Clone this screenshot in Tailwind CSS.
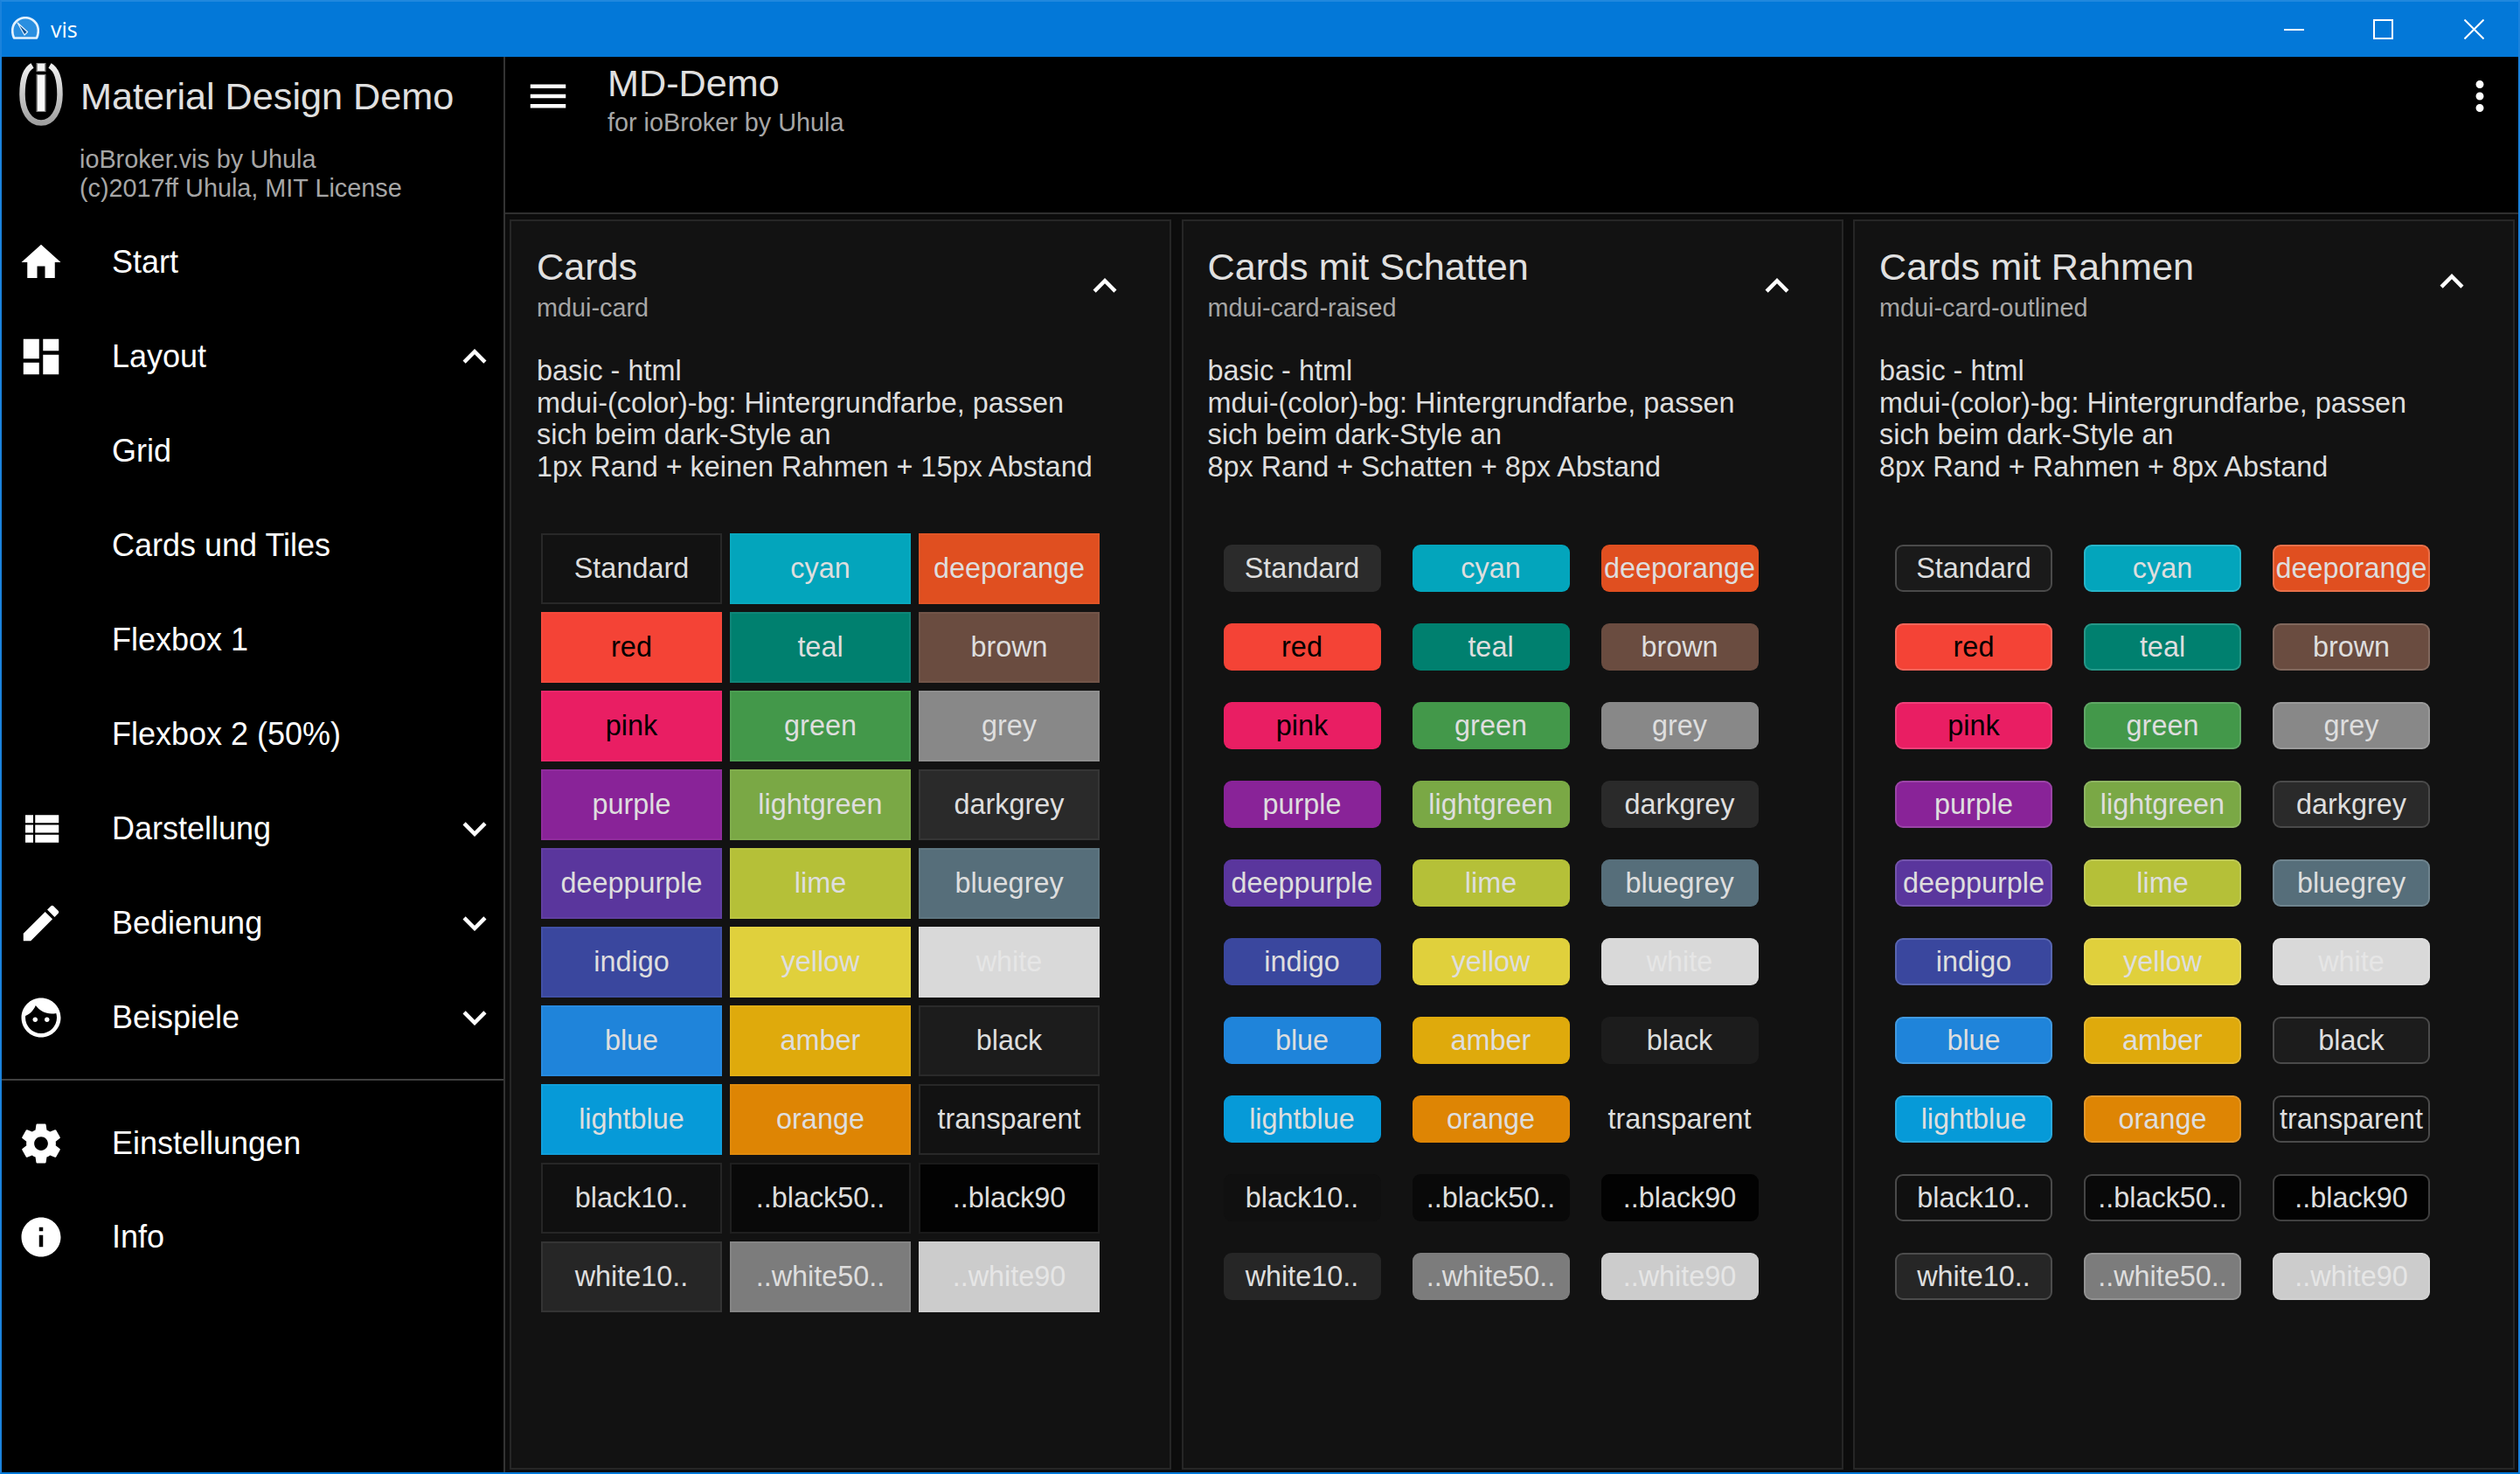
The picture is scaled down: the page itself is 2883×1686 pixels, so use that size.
<!DOCTYPE html>
<html lang="de">
<head>
    <meta charset="UTF-8">
    <title>vis</title>
    <script src="https://cdn.jsdelivr.net/npm/@tailwindcss/browser@4"></script>
</head>
<body class="h-[1686px] w-[2883px] overflow-hidden bg-[#0378d8] [font-family:'Liberation_Sans',sans-serif]">
<div class="flex h-full w-full flex-col border-x-2 border-t-2 border-b-2 border-x-[#1a82dc] border-t-[#2088de] border-b-[#0378d8]">

    <!-- Window title bar -->
    <div class="flex h-[63px] shrink-0 items-center bg-[#0378d8] text-white">
        <svg class="-mt-[4px] ml-[11px] h-[26px] w-[32px]" viewBox="0 0 32 26">
            <path d="M3 24.5 Q1.2 20.5 1.2 16 A14.8 14.8 0 0 1 30.8 16 Q30.8 20.5 29 24.5 Z" fill="#2a8fe0" stroke="#e4f2fd" stroke-width="2.6" stroke-linejoin="round"/>
            <path d="M7 7 L18.5 17.5 L15 21 Z" fill="#0a4f92" stroke="#e4f2fd" stroke-width="1.2" stroke-linejoin="round"/>
        </svg>
        <span class="ml-[13px] [font-family:'Open_Sans',sans-serif] text-[25px] leading-none">vis</span>
        <div class="ml-auto flex items-center">
            <div class="mr-[79px] h-[2px] w-[23px] bg-white"></div>
            <div class="mr-[81px] h-[23px] w-[23px] border-2 border-white"></div>
            <svg class="mr-[39px] h-[23px] w-[23px]" viewBox="0 0 23 23"><path d="M0.5 0.5 L22.5 22.5 M22.5 0.5 L0.5 22.5" stroke="#fff" stroke-width="2"/></svg>
        </div>
    </div>

    <div class="flex min-h-0 flex-1">
        <!-- Sidebar -->
        <aside class="flex w-[576px] shrink-0 flex-col border-r-2 border-[#333] bg-black text-white">
            <div class="relative h-[181px] shrink-0">
                <svg class="absolute left-[19px] top-[6px] h-[74px] w-[52px]" viewBox="0 0 52 74">
                    <defs>
                        <linearGradient id="logoRing" x1="0" y1="0" x2="0" y2="1">
                            <stop offset="0" stop-color="#efefef"/>
                            <stop offset="0.55" stop-color="#c4c4c4"/>
                            <stop offset="1" stop-color="#a0a0a0"/>
                        </linearGradient>
                    </defs>
                    <path d="M16 4 C7 9 4.5 24 4.5 37 C4.5 56 13 69.5 26 69.5 C39 69.5 47.5 56 47.5 37 C47.5 24 45 9 36 4" fill="none" stroke="url(#logoRing)" stroke-width="6.5"/>
                    <rect x="20.5" y="1" width="11" height="10" fill="#8a8a8a"/>
                    <rect x="22" y="2" width="8" height="8" fill="#f4f4f4"/>
                    <rect x="20.5" y="14" width="11" height="43" fill="#8a8a8a"/>
                    <rect x="22" y="15" width="8" height="41" fill="#f8f8f8"/>
                </svg>
                <div class="absolute left-[90px] top-[15px] whitespace-nowrap text-[43.2px] leading-[60px] text-[#e0e0e0]">Material Design Demo</div>
                <div class="absolute left-[89px] top-[101px] whitespace-nowrap text-[28.8px] leading-[33px] text-[#a6a6a6]">ioBroker.vis by Uhula<br>(c)2017ff Uhula, MIT License</div>
            </div>

            <nav class="flex flex-col">
                <a class="flex h-[108px] items-center text-[36px]">
                    <svg class="ml-[18px] h-[54px] w-[54px] fill-white" viewBox="0 0 24 24"><path d="M10 20v-6h4v6h5v-8h3L12 3 2 12h3v8z"/></svg>
                    <span class="ml-[54px]">Start</span>
                </a>
                <a class="flex h-[108px] items-center text-[36px]">
                    <svg class="ml-[18px] h-[54px] w-[54px] fill-white" viewBox="0 0 24 24"><path d="M3 13h8V3H3v10zm0 8h8v-6H3v6zm10 0h8V11h-8v10zm0-18v6h8V3h-8z"/></svg>
                    <span class="ml-[54px]">Layout</span>
                    <svg class="ml-auto mr-[6px] h-[54px] w-[54px] fill-white" viewBox="0 0 24 24"><path d="M12 8l-6 6 1.41 1.41L12 10.83l4.59 4.58L18 14z"/></svg>
                </a>
                <a class="flex h-[108px] items-center pl-[126px] text-[36px]">Grid</a>
                <a class="flex h-[108px] items-center pl-[126px] text-[36px]">Cards und Tiles</a>
                <a class="flex h-[108px] items-center pl-[126px] text-[36px]">Flexbox 1</a>
                <a class="flex h-[108px] items-center pl-[126px] text-[36px]">Flexbox 2 (50%)</a>
                <a class="flex h-[108px] items-center text-[36px]">
                    <svg class="ml-[18px] h-[54px] w-[54px] fill-white" viewBox="0 0 24 24"><path d="M4 14h4v-4H4v4zm0 5h4v-4H4v4zM4 9h4V5H4v4zm5 5h12v-4H9v4zm0 5h12v-4H9v4zM9 5v4h12V5H9z"/></svg>
                    <span class="ml-[54px]">Darstellung</span>
                    <svg class="ml-auto mr-[6px] h-[54px] w-[54px] fill-white" viewBox="0 0 24 24"><path d="M16.59 8.59L12 13.17 7.41 8.59 6 10l6 6 6-6z"/></svg>
                </a>
                <a class="flex h-[108px] items-center text-[36px]">
                    <svg class="ml-[18px] h-[54px] w-[54px] fill-white" viewBox="0 0 24 24"><path d="M3 17.25V21h3.75L17.81 9.94l-3.75-3.75L3 17.25zM20.71 7.04c.39-.39.39-1.02 0-1.41l-2.34-2.34c-.39-.39-1.02-.39-1.41 0l-1.83 1.83 3.75 3.75 1.83-1.83z"/></svg>
                    <span class="ml-[54px]">Bedienung</span>
                    <svg class="ml-auto mr-[6px] h-[54px] w-[54px] fill-white" viewBox="0 0 24 24"><path d="M16.59 8.59L12 13.17 7.41 8.59 6 10l6 6 6-6z"/></svg>
                </a>
                <a class="flex h-[108px] items-center text-[36px]">
                    <svg class="ml-[18px] h-[54px] w-[54px] fill-white" viewBox="0 0 24 24"><path d="M9 11.75c-.69 0-1.25.56-1.25 1.25s.56 1.25 1.25 1.25 1.25-.56 1.25-1.25-.56-1.25-1.25-1.25zm6 0c-.69 0-1.25.56-1.25 1.25s.56 1.25 1.25 1.25 1.25-.56 1.25-1.25-.56-1.25-1.25-1.25zM12 2C6.48 2 2 6.48 2 12s4.48 10 10 10 10-4.48 10-10S17.52 2 12 2zm0 18c-4.41 0-8-3.59-8-8 0-.29.02-.58.05-.86 2.36-1.05 4.23-2.98 5.21-5.37C11.07 8.33 14.05 10 17.42 10c.78 0 1.53-.09 2.25-.26.21.71.33 1.47.33 2.26 0 4.41-3.59 8-8 8z"/></svg>
                    <span class="ml-[54px]">Beispiele</span>
                    <svg class="ml-auto mr-[6px] h-[54px] w-[54px] fill-white" viewBox="0 0 24 24"><path d="M16.59 8.59L12 13.17 7.41 8.59 6 10l6 6 6-6z"/></svg>
                </a>
            </nav>

            <div class="mb-[18px] mt-[16px] h-[2px] shrink-0 bg-[#404040]"></div>

            <nav class="flex flex-col">
                <a class="flex h-[107px] items-center text-[36px]">
                    <svg class="ml-[18px] h-[54px] w-[54px] fill-white" viewBox="0 0 24 24"><path d="M19.43 12.98c.04-.32.07-.64.07-.98s-.03-.66-.07-.98l2.11-1.65c.19-.15.24-.42.12-.64l-2-3.46c-.12-.22-.39-.3-.61-.22l-2.49 1c-.52-.4-1.08-.73-1.69-.98l-.38-2.65C14.46 2.18 14.25 2 14 2h-4c-.25 0-.46.18-.49.42l-.38 2.65c-.61.25-1.17.59-1.69.98l-2.49-1c-.23-.09-.49 0-.61.22l-2 3.46c-.13.22-.07.49.12.64l2.11 1.65c-.04.32-.07.65-.07.98s.03.66.07.98l-2.11 1.65c-.19.15-.24.42-.12.64l2 3.46c.12.22.39.3.61.22l2.49-1c.52.4 1.08.73 1.69.98l.38 2.65c.03.24.24.42.49.42h4c.25 0 .46-.18.49-.42l.38-2.65c.61-.25 1.17-.59 1.69-.98l2.49 1c.23.09.49 0 .61-.22l2-3.46c.12-.22.07-.49-.12-.64l-2.11-1.65zM12 15.5c-1.93 0-3.5-1.57-3.5-3.5s1.57-3.5 3.5-3.5 3.5 1.57 3.5 3.5-1.57 3.5-3.5 3.5z"/></svg>
                    <span class="ml-[54px]">Einstellungen</span>
                </a>
                <a class="flex h-[108px] items-center text-[36px]">
                    <svg class="ml-[18px] h-[54px] w-[54px] fill-white" viewBox="0 0 24 24"><path d="M12 2C6.48 2 2 6.48 2 12s4.48 10 10 10 10-4.48 10-10S17.52 2 12 2zm1 15h-2v-6h2v6zm0-8h-2V7h2v2z"/></svg>
                    <span class="ml-[54px]">Info</span>
                </a>
            </nav>
        </aside>

        <main class="flex min-w-0 flex-1 flex-col bg-[#0c0c0c]">
            <!-- App header -->
            <header class="flex h-[180px] shrink-0 items-start border-b-2 border-[#2f2f2f] bg-black text-white">
                <svg class="ml-[22px] mt-[18px] h-[54px] w-[54px] fill-white" viewBox="0 0 24 24"><path d="M3 18h18v-2H3v2zm0-5h18v-2H3v2zm0-7v2h18V6H3z"/></svg>
                <div class="ml-[41px]">
                    <div class="mt-[2px] text-[43.2px] leading-[56px] text-[#e0e0e0]">MD-Demo</div>
                    <div class="mt-[1px] text-[28.8px] leading-[33px] text-[#a6a6a6]">for ioBroker by Uhula</div>
                </div>
                <svg class="ml-auto mr-[17px] mt-[18px] h-[54px] w-[54px] fill-white" viewBox="0 0 24 24"><path d="M12 8c1.1 0 2-.9 2-2s-.9-2-2-2-2 .9-2 2 .9 2 2 2zm0 2c-1.1 0-2 .9-2 2s.9 2 2 2 2-.9 2-2-.9-2-2-2zm0 6c-1.1 0-2 .9-2 2s.9 2 2 2 2-.9 2-2-.9-2-2-2z"/></svg>
            </header>

            <div class="grid min-h-0 flex-1 grid-cols-3 gap-x-[11.5px] pb-[3px] pl-[5px] pr-[4px] pt-[6px] text-[32.4px] text-[#dedede]">

                <!-- Card: mdui-card -->
                <section class="relative border-2 border-[#262626] bg-[#121212] pl-[29px]">
                    <h2 class="mt-[24px] text-[43.2px] leading-[56px] text-[#e0e0e0]">Cards</h2>
                    <p class="mt-[3px] text-[28.8px] leading-[33px] text-[#a6a6a6]">mdui-card</p>
                    <svg class="absolute right-[47px] top-[47px] h-[54px] w-[54px] fill-white" viewBox="0 0 24 24"><path d="M12 8l-6 6 1.41 1.41L12 10.83l4.59 4.58L18 14z"/></svg>
                    <p class="mt-[37px] leading-[36.7px]">basic - html<br>mdui-(color)-bg: Hintergrundfarbe, passen<br>sich beim dark-Style an<br>1px Rand + keinen Rahmen + 15px Abstand</p>
                    <div class="ml-[5px] mt-[57px] grid grid-cols-[repeat(3,207px)] auto-rows-[81px] gap-[9px]">
                        <div class="flex items-center justify-center border-2 border-[#282828] bg-[#121212]">Standard</div>
                        <div class="flex items-center justify-center border-2 border-[#09a9bf] bg-[#03a5bc]">cyan</div>
                        <div class="flex items-center justify-center border-2 border-[#e25526] bg-[#e04f20]">deeporange</div>
                        <div class="flex items-center justify-center border-2 border-[#f5493b] bg-[#f44336] text-black">red</div>
                        <div class="flex items-center justify-center border-2 border-[#0f8679] bg-[#00806f]">teal</div>
                        <div class="flex items-center justify-center border-2 border-[#725549] bg-[#6a4c40]">brown</div>
                        <div class="flex items-center justify-center border-2 border-[#ea266a] bg-[#e91e63] text-black">pink</div>
                        <div class="flex items-center justify-center border-2 border-[#4c9e52] bg-[#43984a]">green</div>
                        <div class="flex items-center justify-center border-2 border-[#8f8f8f] bg-[#888888]">grey</div>
                        <div class="flex items-center justify-center border-2 border-[#8f2c9c] bg-[#892398]">purple</div>
                        <div class="flex items-center justify-center border-2 border-[#80ad4c] bg-[#7aa845]">lightgreen</div>
                        <div class="flex items-center justify-center border-2 border-[#353535] bg-[#2a2a2a]">darkgrey</div>
                        <div class="flex items-center justify-center border-2 border-[#613fa1] bg-[#5a369d]">deeppurple</div>
                        <div class="flex items-center justify-center border-2 border-[#bac440] bg-[#b5c038]">lime</div>
                        <div class="flex items-center justify-center border-2 border-[#5e7681] bg-[#566e7a]">bluegrey</div>
                        <div class="flex items-center justify-center border-2 border-[#4150a6] bg-[#3a479e]">indigo</div>
                        <div class="flex items-center justify-center border-2 border-[#e1d240] bg-[#e0d03c]">yellow</div>
                        <div class="flex items-center justify-center border-2 border-[#dadada] bg-[#d9d9d9] text-[#e6e6e6]">white</div>
                        <div class="flex items-center justify-center border-2 border-[#278adf] bg-[#1f84da]">blue</div>
                        <div class="flex items-center justify-center border-2 border-[#e1ae14] bg-[#dfaa0c]">amber</div>
                        <div class="flex items-center justify-center border-2 border-[#2a2a2a] bg-[#1c1c1c]">black</div>
                        <div class="flex items-center justify-center border-2 border-[#109fdb] bg-[#069ad8]">lightblue</div>
                        <div class="flex items-center justify-center border-2 border-[#e08a0c] bg-[#de8504]">orange</div>
                        <div class="flex items-center justify-center border-2 border-[#282828] bg-[#121212]">transparent</div>
                        <div class="flex items-center justify-center border-2 border-[#262626] bg-[#101010]">black10..</div>
                        <div class="flex items-center justify-center border-2 border-[#1f1f1f] bg-[#090909]">..black50..</div>
                        <div class="flex items-center justify-center border-2 border-[#1a1a1a] bg-[#020202]">..black90</div>
                        <div class="flex items-center justify-center border-2 border-[#343434] bg-[#262626]">white10..</div>
                        <div class="flex items-center justify-center border-2 border-[#858585] bg-[#7c7c7c]">..white50..</div>
                        <div class="flex items-center justify-center border-2 border-[#cecece] bg-[#cccccc] text-[#e6e6e6]">..white90</div>
                    </div>
                </section>

                <!-- Card: mdui-card-raised -->
                <section class="relative border-2 border-[#262626] bg-[#121212] pl-[28px]">
                    <h2 class="mt-[24px] text-[43.2px] leading-[56px] text-[#e0e0e0]">Cards mit Schatten</h2>
                    <p class="mt-[3px] text-[28.8px] leading-[33px] text-[#a6a6a6]">mdui-card-raised</p>
                    <svg class="absolute right-[47px] top-[47px] h-[54px] w-[54px] fill-white" viewBox="0 0 24 24"><path d="M12 8l-6 6 1.41 1.41L12 10.83l4.59 4.58L18 14z"/></svg>
                    <p class="mt-[37px] leading-[36.7px]">basic - html<br>mdui-(color)-bg: Hintergrundfarbe, passen<br>sich beim dark-Style an<br>8px Rand + Schatten + 8px Abstand</p>
                    <div class="ml-[18px] mt-[70px] grid grid-cols-[repeat(3,180px)] auto-rows-[54px] gap-[36px]">
                        <div class="flex items-center justify-center rounded-[9px] bg-[#2b2b2b]">Standard</div>
                        <div class="flex items-center justify-center rounded-[9px] bg-[#03a5bc]">cyan</div>
                        <div class="flex items-center justify-center rounded-[9px] bg-[#e04f20]">deeporange</div>
                        <div class="flex items-center justify-center rounded-[9px] bg-[#f44336] text-black">red</div>
                        <div class="flex items-center justify-center rounded-[9px] bg-[#00806f]">teal</div>
                        <div class="flex items-center justify-center rounded-[9px] bg-[#6a4c40]">brown</div>
                        <div class="flex items-center justify-center rounded-[9px] bg-[#e91e63] text-black">pink</div>
                        <div class="flex items-center justify-center rounded-[9px] bg-[#43984a]">green</div>
                        <div class="flex items-center justify-center rounded-[9px] bg-[#888888]">grey</div>
                        <div class="flex items-center justify-center rounded-[9px] bg-[#892398]">purple</div>
                        <div class="flex items-center justify-center rounded-[9px] bg-[#7aa845]">lightgreen</div>
                        <div class="flex items-center justify-center rounded-[9px] bg-[#2a2a2a]">darkgrey</div>
                        <div class="flex items-center justify-center rounded-[9px] bg-[#5a369d]">deeppurple</div>
                        <div class="flex items-center justify-center rounded-[9px] bg-[#b5c038]">lime</div>
                        <div class="flex items-center justify-center rounded-[9px] bg-[#566e7a]">bluegrey</div>
                        <div class="flex items-center justify-center rounded-[9px] bg-[#3a479e]">indigo</div>
                        <div class="flex items-center justify-center rounded-[9px] bg-[#e0d03c]">yellow</div>
                        <div class="flex items-center justify-center rounded-[9px] bg-[#d9d9d9] text-[#e6e6e6]">white</div>
                        <div class="flex items-center justify-center rounded-[9px] bg-[#1f84da]">blue</div>
                        <div class="flex items-center justify-center rounded-[9px] bg-[#dfaa0c]">amber</div>
                        <div class="flex items-center justify-center rounded-[9px] bg-[#1c1c1c]">black</div>
                        <div class="flex items-center justify-center rounded-[9px] bg-[#069ad8]">lightblue</div>
                        <div class="flex items-center justify-center rounded-[9px] bg-[#de8504]">orange</div>
                        <div class="flex items-center justify-center rounded-[9px]">transparent</div>
                        <div class="flex items-center justify-center rounded-[9px] bg-[#101010]">black10..</div>
                        <div class="flex items-center justify-center rounded-[9px] bg-[#090909]">..black50..</div>
                        <div class="flex items-center justify-center rounded-[9px] bg-[#020202]">..black90</div>
                        <div class="flex items-center justify-center rounded-[9px] bg-[#262626]">white10..</div>
                        <div class="flex items-center justify-center rounded-[9px] bg-[#7c7c7c]">..white50..</div>
                        <div class="flex items-center justify-center rounded-[9px] bg-[#cccccc] text-[#e6e6e6]">..white90</div>
                    </div>
                </section>

                <!-- Card: mdui-card-outlined -->
                <section class="relative border-2 border-[#262626] bg-[#121212] pl-[28px]">
                    <h2 class="mt-[24px] text-[43.2px] leading-[56px] text-[#e0e0e0]">Cards mit Rahmen</h2>
                    <p class="mt-[3px] text-[28.8px] leading-[33px] text-[#a6a6a6]">mdui-card-outlined</p>
                    <svg class="absolute right-[43px] top-[42px] h-[54px] w-[54px] fill-white" viewBox="0 0 24 24"><path d="M12 8l-6 6 1.41 1.41L12 10.83l4.59 4.58L18 14z"/></svg>
                    <p class="mt-[37px] leading-[36.7px]">basic - html<br>mdui-(color)-bg: Hintergrundfarbe, passen<br>sich beim dark-Style an<br>8px Rand + Rahmen + 8px Abstand</p>
                    <div class="ml-[18px] mt-[70px] grid grid-cols-[repeat(3,180px)] auto-rows-[54px] gap-[36px]">
                        <div class="flex items-center justify-center rounded-[9px] border-2 border-[#4a4a4a] bg-[#1a1a1a]">Standard</div>
                        <div class="flex items-center justify-center rounded-[9px] border-2 border-[#26b5c9] bg-[#03a5bc]">cyan</div>
                        <div class="flex items-center justify-center rounded-[9px] border-2 border-[#e8704a] bg-[#e04f20]">deeporange</div>
                        <div class="flex items-center justify-center rounded-[9px] border-2 border-[#f6655a] bg-[#f44336] text-black">red</div>
                        <div class="flex items-center justify-center rounded-[9px] border-2 border-[#269788] bg-[#00806f]">teal</div>
                        <div class="flex items-center justify-center rounded-[9px] border-2 border-[#80675c] bg-[#6a4c40]">brown</div>
                        <div class="flex items-center justify-center rounded-[9px] border-2 border-[#ed4079] bg-[#e91e63] text-black">pink</div>
                        <div class="flex items-center justify-center rounded-[9px] border-2 border-[#5fa765] bg-[#43984a]">green</div>
                        <div class="flex items-center justify-center rounded-[9px] border-2 border-[#9a9a9a] bg-[#888888]">grey</div>
                        <div class="flex items-center justify-center rounded-[9px] border-2 border-[#9b44a7] bg-[#892398]">purple</div>
                        <div class="flex items-center justify-center rounded-[9px] border-2 border-[#8eb561] bg-[#7aa845]">lightgreen</div>
                        <div class="flex items-center justify-center rounded-[9px] border-2 border-[#4a4a4a] bg-[#2a2a2a]">darkgrey</div>
                        <div class="flex items-center justify-center rounded-[9px] border-2 border-[#7354ac] bg-[#5a369d]">deeppurple</div>
                        <div class="flex items-center justify-center rounded-[9px] border-2 border-[#c0ca55] bg-[#b5c038]">lime</div>
                        <div class="flex items-center justify-center rounded-[9px] border-2 border-[#6f848e] bg-[#566e7a]">bluegrey</div>
                        <div class="flex items-center justify-center rounded-[9px] border-2 border-[#5865b0] bg-[#3a479e]">indigo</div>
                        <div class="flex items-center justify-center rounded-[9px] border-2 border-[#e4d657] bg-[#e0d03c]">yellow</div>
                        <div class="flex items-center justify-center rounded-[9px] border-2 border-[#dcdcdc] bg-[#d9d9d9] text-[#e6e6e6]">white</div>
                        <div class="flex items-center justify-center rounded-[9px] border-2 border-[#4199e0] bg-[#1f84da]">blue</div>
                        <div class="flex items-center justify-center rounded-[9px] border-2 border-[#e4b72e] bg-[#dfaa0c]">amber</div>
                        <div class="flex items-center justify-center rounded-[9px] border-2 border-[#4a4a4a] bg-[#1c1c1c]">black</div>
                        <div class="flex items-center justify-center rounded-[9px] border-2 border-[#2aaade] bg-[#069ad8]">lightblue</div>
                        <div class="flex items-center justify-center rounded-[9px] border-2 border-[#e39728] bg-[#de8504]">orange</div>
                        <div class="flex items-center justify-center rounded-[9px] border-2 border-[#4a4a4a] bg-[#121212]">transparent</div>
                        <div class="flex items-center justify-center rounded-[9px] border-2 border-[#4a4a4a] bg-[#101010]">black10..</div>
                        <div class="flex items-center justify-center rounded-[9px] border-2 border-[#454545] bg-[#090909]">..black50..</div>
                        <div class="flex items-center justify-center rounded-[9px] border-2 border-[#404040] bg-[#020202]">..black90</div>
                        <div class="flex items-center justify-center rounded-[9px] border-2 border-[#4c4c4c] bg-[#262626]">white10..</div>
                        <div class="flex items-center justify-center rounded-[9px] border-2 border-[#929292] bg-[#7c7c7c]">..white50..</div>
                        <div class="flex items-center justify-center rounded-[9px] border-2 border-[#d0d0d0] bg-[#cccccc] text-[#e6e6e6]">..white90</div>
                    </div>
                </section>
            </div>
        </main>
    </div>
</div>
</body>
</html>
